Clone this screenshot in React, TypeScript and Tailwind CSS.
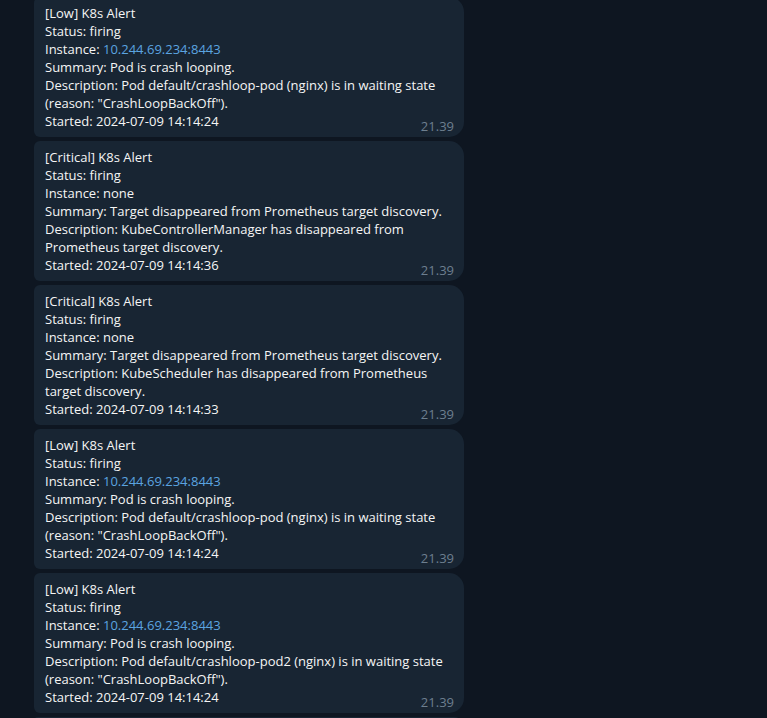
import React from "react";

type Alert = {
  level: string;
  instance: string;
  link: boolean;
  summary: string;
  description: string[];
  started: string;
};

const alerts: Alert[] = [
  {
    level: "Low",
    instance: "10.244.69.234:8443",
    link: true,
    summary: "Pod is crash looping.",
    description: [
      "Description: Pod default/crashloop-pod (nginx) is in waiting state",
      '(reason: "CrashLoopBackOff").',
    ],
    started: "2024-07-09 14:14:24",
  },
  {
    level: "Critical",
    instance: "none",
    link: false,
    summary: "Target disappeared from Prometheus target discovery.",
    description: [
      "Description: KubeControllerManager has disappeared from",
      "Prometheus target discovery.",
    ],
    started: "2024-07-09 14:14:36",
  },
  {
    level: "Critical",
    instance: "none",
    link: false,
    summary: "Target disappeared from Prometheus target discovery.",
    description: [
      "Description: KubeScheduler has disappeared from Prometheus",
      "target discovery.",
    ],
    started: "2024-07-09 14:14:33",
  },
  {
    level: "Low",
    instance: "10.244.69.234:8443",
    link: true,
    summary: "Pod is crash looping.",
    description: [
      "Description: Pod default/crashloop-pod (nginx) is in waiting state",
      '(reason: "CrashLoopBackOff").',
    ],
    started: "2024-07-09 14:14:24",
  },
  {
    level: "Low",
    instance: "10.244.69.234:8443",
    link: true,
    summary: "Pod is crash looping.",
    description: [
      "Description: Pod default/crashloop-pod2 (nginx) is in waiting state",
      '(reason: "CrashLoopBackOff").',
    ],
    started: "2024-07-09 14:14:24",
  },
];

const Bubble: React.FC<{ alert: Alert }> = ({ alert }) => (
  <div className="relative w-[430px] shrink-0 rounded-l-[6px] rounded-r-[15px] bg-[#182533] pl-[11px] pr-[11px] py-[7px] text-[13px] leading-[18px] text-[#f5f5f5] whitespace-nowrap">
    <div>[{alert.level}] K8s Alert</div>
    <div>Status: firing</div>
    <div>
      Instance:{" "}
      {alert.link ? (
        <span className="text-[#5ba4e0]">{alert.instance}</span>
      ) : (
        alert.instance
      )}
    </div>
    <div>Summary: {alert.summary}</div>
    {alert.description.map((line, i) => (
      <div key={i}>{line}</div>
    ))}
    <div>Started: {alert.started}</div>
    <span className="absolute right-[10px] bottom-[3px] text-[13px] leading-[16px] text-[#6d7f8f]">
      21.39
    </span>
  </div>
);

export default function App() {
  return (
    <div
      className="h-[718px] w-[767px] overflow-hidden bg-[#0e1621]"
      style={{ fontFamily: '"Open Sans", "Noto Sans", sans-serif' }}
    >
      <div className="mt-[-3px] flex flex-col gap-[4px] pl-[34px]">
        {alerts.map((a, i) => (
          <Bubble key={i} alert={a} />
        ))}
        {/* next message, only its top edge is in view */}
        <div className="h-[20px] w-[430px] shrink-0 rounded-l-[6px] rounded-r-[15px] bg-[#182533]" />
      </div>
    </div>
  );
}
